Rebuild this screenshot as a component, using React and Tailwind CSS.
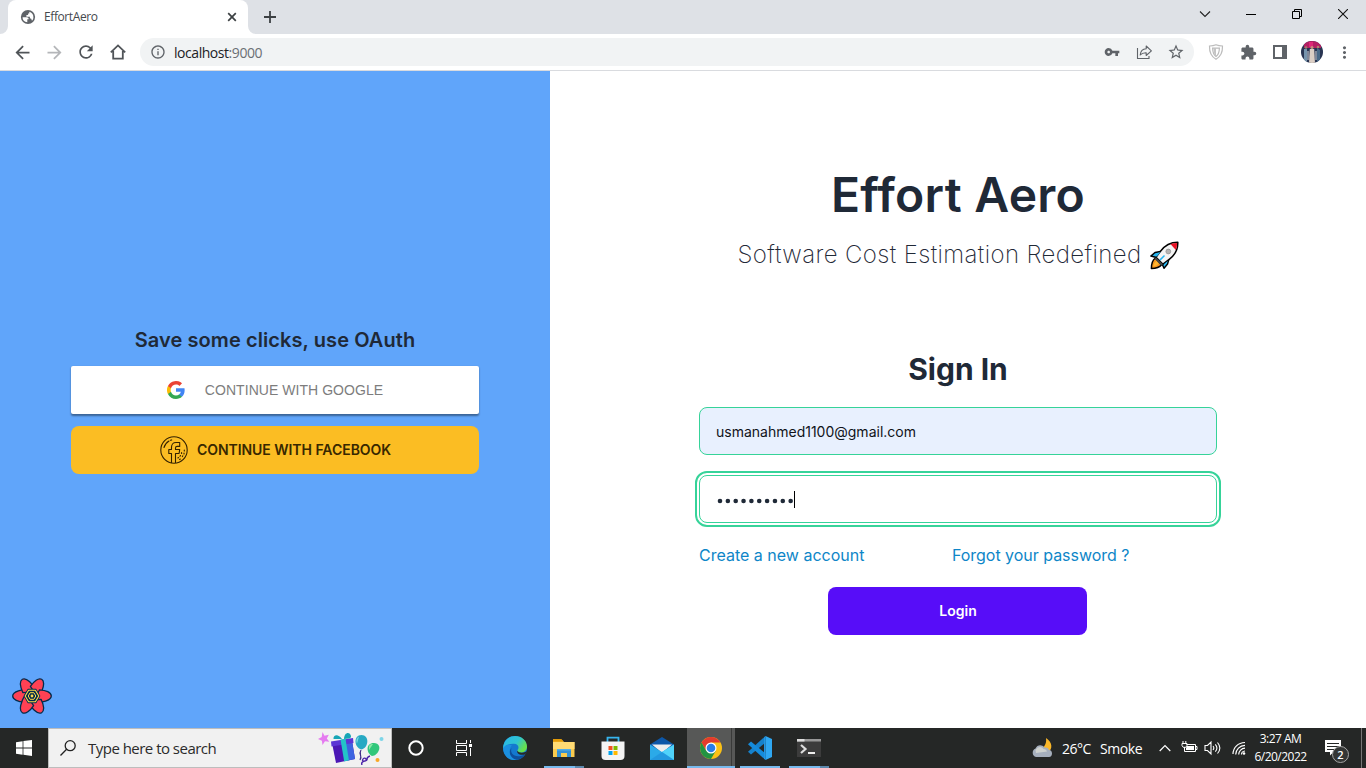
import React from "react";
import {
  MdArrowBack, MdArrowForward, MdRefresh, MdInfoOutline, MdVpnKey,
  MdStarBorder, MdExtension, MdMoreVert,
} from "react-icons/md";

const SYS = "font-['Open_Sans','Noto_Sans',sans-serif]";

function TabStrip() {
  return (
    <div className="flex h-[34px] bg-[#dee1e6] pr-0">
      <svg className="h-[34px] w-2 shrink-0" viewBox="0 0 8 34"><path d="M8 26v8H0a8 8 0 0 0 8-8z" fill="#fff" /></svg>
      <div className="flex w-[240px] items-center rounded-t-[8px] bg-white pl-[12px] pr-[10px]">
        <svg width="16" height="16" viewBox="0 0 16 16">
          <circle cx="8" cy="8" r="7.100" fill="#5f6368" />
          <path d="M2.600 8.300h4.200c1.300 0 1.900.8 1.900 1.900H7.300v3.100C4.500 13.100 2.500 11 2.600 8.300z" fill="#fff" />
          <path d="M9.300 2.800c2.500.5 4.200 2.700 4.100 5.400 0 1.600-.5 2.600-1.400 3.600l-.9-2.300H9.900V7.700H6.400V6.100h1.700V4.500h1.200z" fill="#fff" />
        </svg>
        <span className={`ml-[8px] text-[12px] tracking-[-0.400px] text-[#45494d] ${SYS}`}>EffortAero</span>
        <svg className="ml-auto" width="12" height="12" viewBox="0 0 12 12"><path d="M2.200 2.200l7.600 7.600M9.800 2.200l-7.600 7.600" stroke="#3c4043" strokeWidth="1.700" /></svg>
      </div>
      <svg className="h-[34px] w-2 shrink-0" viewBox="0 0 8 34"><path d="M0 26v8h8a8 8 0 0 1-8-8z" fill="#fff" /></svg>
      <svg className="mt-[10px] ml-[7px]" width="14" height="14" viewBox="0 0 14 14"><path d="M7 1v12M1 7h12" stroke="#3c4043" strokeWidth="1.800" /></svg>
      <div className="ml-auto flex h-[28px] items-center">
        <span className="flex w-[46px] justify-center"><svg width="12" height="12" viewBox="0 0 12 12"><path d="M1 3.500l5 5 5-5" fill="none" stroke="#222" strokeWidth="1.100" /></svg></span>
        <span className="flex w-[46px] justify-center"><svg width="10" height="10" viewBox="0 0 10 10"><path d="M0 5.500h10v-1H0z" fill="#000" shapeRendering="crispEdges" /></svg></span>
        <span className="flex w-[46px] justify-center"><svg width="10" height="10" viewBox="0 0 10 10"><path d="M.5 2.500h7v7h-7zM2.500 2.500v-2h7v7h-2" fill="none" stroke="#000" /></svg></span>
        <span className="flex w-[46px] justify-center"><svg width="10" height="10" viewBox="0 0 10 10"><path d="M0 0l10 10M10 0L0 10" stroke="#111" strokeWidth="1.100" /></svg></span>
      </div>
    </div>
  );
}

function Toolbar() {
  const cell = "flex w-8 shrink-0 justify-center";
  return (
    <div className="flex h-[37px] items-center border-b border-[#d9dbdf] bg-white pl-[6px] text-[#5f6368]">
      <span className={cell}><MdArrowBack size={21} color="#505458" /></span>
      <span className={cell}><MdArrowForward size={21} color="#b4b6b9" /></span>
      <span className={cell}><MdRefresh size={20} color="#505458" /></span>
      <span className={cell}>
        <svg width="18" height="18" viewBox="0 0 18 18"><path d="M1.800 9.300L9 2.400l7.200 6.900M4.200 8v7.600h9.600V8" fill="none" stroke="#505458" strokeWidth="1.800" /></svg>
      </span>
      <div className="ml-[6px] flex h-7 w-[1054px] items-center rounded-full bg-[#f1f3f4] pl-[10px] pr-[2px]">
        <MdInfoOutline size={16} />
        <span className={`ml-2 text-[14px] tracking-[-0.450px] text-[#202124] ${SYS}`}>localhost<span className="text-[#6b6f74]">:9000</span></span>
        <div className="ml-auto flex items-center">
          <span className={cell}><MdVpnKey size={16} /></span>
          <span className={cell}>
            <svg width="16" height="16" viewBox="0 0 16 16" fill="none" stroke="#5f6368" strokeWidth="1.100"><path d="M1.500 4v10.500h11.500V12" /><path d="M4.200 11c.4-3.900 2.400-6 6-6.200V2l5.200 4.900-5.200 4.600V8.700c-2.700-.1-4.500.5-6 2.300z" strokeLinejoin="round" /></svg>
          </span>
          <span className={cell}><MdStarBorder size={18} /></span>
        </div>
      </div>
      <div className="ml-[6px] flex items-center">
        <span className={cell}>
          <svg width="16" height="16" viewBox="0 0 16 16"><path d="M8 .8c2 .9 4.200 1.200 6.500 1.200.2 6-1.500 10.500-6.500 13.200C3 12.500 1.300 8 1.500 2 3.800 2 6 1.700 8 .8z" fill="#fff" stroke="#bcbcbc" strokeWidth="1.200" /><path d="M4.600 4.200h6.800C11.300 8 10.500 10.600 8 12.500 5.500 10.600 4.700 8 4.600 4.200z" fill="#fff" stroke="#bcbcbc" strokeWidth="1.200" /><path d="M8 4v8.500C6.300 11 5.600 8 5.500 4z" fill="#c4c4c4" /></svg>
        </span>
        <span className={cell}><MdExtension size={17} /></span>
        <span className={cell}><svg width="14" height="14" viewBox="0 0 14 14"><path d="M0 0h14v14H0zM2 2v10h7V2z" fill="#5f6368" fillRule="evenodd" /></svg></span>
        <span className={cell}>
          <svg width="22" height="22" viewBox="0 0 22 22">
            <clipPath id="av"><circle cx="11" cy="11" r="11" /></clipPath>
            <g clipPath="url(#av)">
              <path d="M0 0h22v22H0z" fill="#293552" /><path d="M3 0h17v7H3z" fill="#b51f63" /><path d="M8 1h4v5H8z" fill="#de2877" />
              <path d="M3 8h3v14H3z" fill="#7694ad" /><path d="M8.800 8h4.400l.8 14H8z" fill="#dccfc5" /><path d="M16 7l3 2v10l-3 3z" fill="#496987" />
              <circle cx="11" cy="6.500" r="1.500" fill="#c3937d" /><circle cx="5" cy="6.500" r="1.300" fill="#a47b6b" /><circle cx="17" cy="6" r="1.300" fill="#b3836d" /><path d="M6.500 10h1v9h-1zM14.500 10h1v9h-1z" fill="#d8dce0" />
            </g>
          </svg>
        </span>
        <span className={cell}><MdMoreVert size={19} /></span>
      </div>
    </div>
  );
}

function GoogleIcon() {
  return (
    <svg width="18" height="18" viewBox="0 0 18 18">
      <path d="M17.640 9.200c0-.64-.06-1.250-.16-1.840H9v3.480h4.840a4.140 4.140 0 0 1-1.790 2.720v2.260h2.900c1.700-1.570 2.690-3.880 2.690-6.620z" fill="#4285f4" />
      <path d="M9 18c2.430 0 4.470-.8 5.960-2.180l-2.910-2.260c-.81.540-1.840.86-3.050.86-2.340 0-4.330-1.580-5.040-3.710H.96v2.330A9 9 0 0 0 9 18z" fill="#34a853" />
      <path d="M3.960 10.710a5.400 5.400 0 0 1 0-3.420V4.960H.96a9 9 0 0 0 0 8.080z" fill="#fbbc05" />
      <path d="M9 3.580c1.320 0 2.510.45 3.440 1.350l2.580-2.590A9 9 0 0 0 .96 4.960l3 2.330C4.670 5.160 6.660 3.580 9 3.580z" fill="#ea4335" />
    </svg>
  );
}

function FacebookIcon() {
  return (
    <svg width="28" height="28" viewBox="0 0 28 28" fill="none" stroke="#332100" strokeWidth="1.100">
      <circle cx="14" cy="14" r="13.200" />
      <path d="M11.500 27V17.500H8.800v-4h2.700v-2.200c0-3 1.700-4.800 4.500-4.800h3.700v3.900h-2.600c-1.100 0-1.600.5-1.600 1.500v1.600h4.200l-.6 4h-3.600V27" strokeLinejoin="round" />
      <path d="M4 11.500c.8-2.900 2.500-5 5-6.500M10.500 4.300l1.200-.4" strokeLinecap="round" />
      <path d="M24.300 14v1M24 17v1M22.800 19.800l-.4.8M21.600 16.500v1M20.500 19.500l-.5.8M18.500 21.500l-.6.500M20.300 23l-.7.500" strokeLinecap="round" />
    </svg>
  );
}

function QueryLogo() {
  return (
    <svg width="40" height="36" viewBox="0 0 40 36">
      <g fill="#ff4154" stroke="#002c4b" strokeWidth="1.300" strokeLinejoin="round">
        {[0, 60, 120, 180, 240, 300].map((a) => (
          <path key={a} transform={`rotate(${a} 20 18)`} d="M17.500 11.500C10.500 11.200.7 13.300.7 18c0 3.600 5.500 5.800 11.800 6.200L15.500 18z" />
        ))}
      </g>
      <path d="M16.300 11.500h7.400l3.800 6.500-3.800 6.500h-7.400L12.500 18z" fill="#002c4b" stroke="#002c4b" strokeWidth="1.500" strokeLinejoin="round" />
      <g fill="none" stroke="#ffd94c" strokeLinejoin="round"><path d="M16.600 12.200h6.800l3.400 5.800-3.400 5.800h-6.800L13.200 18z" strokeWidth="1.100" /><path d="M18.100 14.700h3.800l1.900 3.300-1.900 3.300h-3.800L16.200 18z" strokeWidth="1" /></g>
      <circle cx="20" cy="18" r="1.400" fill="#ffd94c" />
    </svg>
  );
}

function OAuthPanel() {
  return (
    <div className="flex w-[550px] shrink-0 flex-col bg-[#60a5fa]">
      <div className="mt-[255px] ml-[71px] flex w-[408px] flex-col gap-3 text-center text-[#1f2937]">
        <h3 className="text-[20px]/[28px] font-semibold tracking-[0.080px]">Save some clicks, use OAuth</h3>
        <button className="flex h-12 items-center justify-center rounded-[2px] bg-white shadow-[0_1.500px_2px_rgba(0,0,0,0.400)]">
          <GoogleIcon />
          <span className="ml-[20px] font-['Liberation_Sans',sans-serif] text-[14px] tracking-[0.050px] text-[#7d7d7d]">CONTINUE WITH GOOGLE</span>
        </button>
        <button className="flex h-12 items-center justify-center gap-[9px] rounded-lg bg-[#fbbd23] pl-px text-[14px] font-semibold tracking-[-0.040px] text-[#382800]">
          <FacebookIcon />
          <span className="pb-px">CONTINUE WITH FACEBOOK</span>
        </button>
      </div>
      <div className="mt-auto mb-[14px] ml-3"><QueryLogo /></div>
    </div>
  );
}

function Rocket() {
  return (
    <svg width="29" height="29" viewBox="0 0 29 29" strokeLinejoin="round">
      <path d="M5.500 17C2.500 19 1.400 23 1.400 27.500c4.600 0 8.100-1 10.100-3.800z" fill="#f7941d" stroke="#000" strokeWidth="1.500" />
      <path d="M3.300 25.500c.3-2.600 1.400-4.500 3.200-5.500l2.300 2.300c-1.200 1.800-3 2.800-5.500 3.200z" fill="#ffb52e" />
      <path d="M10.500 10.500L5 11.500.9 15l4.600 1.200 7 7.500 1.500 3.600 3.500-4.200 1.500-5.600z" fill="#27b5ef" stroke="#000" strokeWidth="1.500" />
      <path d="M27.800 1.200c.2 6.300-2.300 12.300-8.300 17l-6.500 5L6 16.200l4.500-6C15 4 21 1.200 27.800 1.200z" fill="#f4f4f4" stroke="#000" strokeWidth="1.500" />
      <path d="M10.700 11L6.500 12.300 3.500 14.700l3.300.8zM17.700 20l-3 2.500-.8 1.500.4 1.500 2.300-2.800z" fill="#27b5ef" />
      <path d="M20.500 3c2.200-.8 4.400-1.100 6.600-1.100 0 2.400-.4 4.800-1.300 7z" fill="#e81224" />
      <path d="M6 16.200l7 7-2 1.300L4.600 17.700z" fill="#444" />
      <circle cx="18.300" cy="10.500" r="2.400" fill="#b4b4b4" stroke="#8d8d8d" strokeWidth=".7" />
      <path d="M14.500 14.500l-4.600 4.600" stroke="#27b5ef" strokeWidth="1.500" />
    </svg>
  );
}

function SignIn() {
  return (
    <div className="flex flex-1 flex-col items-center bg-white text-[#1f2937]">
      <h1 className="mt-[100px] text-[48px]/[48px] font-semibold tracking-[0.250px]">Effort Aero</h1>
      <div className="mt-[20px] flex h-8 items-center">
        <h2 className="text-[24px]/[32px] font-[240] tracking-[0.380px]">Software Cost Estimation Redefined</h2>
        <span className="ml-[8px]"><Rocket /></span>
      </div>
      <h2 className="mt-[80px] text-[30px]/[36px] font-bold">Sign In</h2>
      <div className="mt-[20px] flex h-12 w-[518px] items-center rounded-lg border border-[#36d399] bg-[#e8f0fe] px-4 text-[14px] text-[#10131a]">usmanahmed1100@gmail.com</div>
      <div className="mt-5 flex h-12 w-[518px] items-center rounded-lg border border-[#36d399] bg-white px-4 outline-2 outline-offset-2 outline-[#36d399]">
        <svg className="mt-[4px]" width="78" height="6" viewBox="0 0 78 6" fill="#1f2937">
          {Array.from({ length: 10 }, (_, i) => <circle key={i} cx={4 + i * 7.85} cy="3" r="2.300" />)}
        </svg>
        <span className="h-[17px] w-px bg-black" />
      </div>
      <div className="mt-5 grid h-6 w-[518px] grid-cols-[253px_1fr] text-[16px]/[24px] text-[#0e86c8]">
        <a>Create a new account</a>
        <a className="tracking-[-0.030px]">Forgot your password ?</a>
      </div>
      <button className="mt-5 mr-px h-12 w-[259px] rounded-lg bg-[#570df8] pb-[2px] pl-px text-[14px] font-semibold text-white">Login</button>
    </div>
  );
}

function Gift() {
  return (
    <svg width="68" height="34" viewBox="0 0 68 34">
      <path d="M5.500 1l2 3.800 4.300-1-2 3.800 2.500 3.200-4.300-.5L5.500 14l-.6-4.300L1 8l3.700-2z" fill="#e57bf0" />
      <path d="M15 12l20-2.500 3 18.500-19 4z" fill="#4b17b5" /><path d="M28 11l7-1.500 3 18.500-8 1.700z" fill="#3d64e0" />
      <path d="M14 10.500l22-3.500.5 5-22 3.500z" fill="#5b35d5" /><path d="M23.500 8.500l5-.8 3.400 21.500-4.700 1.200z" fill="#23c3c8" />
      <path d="M25 8c-4-6-9-4-8.500 0zM27 8c0-7 6-8 7-3 .3 1.500-1 2.300-2 2.500z" fill="#16a6b6" />
      <path d="M44 19c-3 5 2 5-1 10" fill="none" stroke="#402b87" strokeWidth="1.200" />
      <path d="M53 25c-6 2 0 4-5 5s-1-5 1-2-6 1-4 6" fill="none" stroke="#4c23a8" strokeWidth="1.400" />
      <path d="M44.500 4c-8.500 0-7.500 13 0 14.500 7.500-2 8-14.500 0-14.500z" fill="#27a9c3" /><path d="M42 5.500c-3 1.500-3 5-2 7z" fill="#7dd9e2" />
      <path d="M57 12c-9 0-7.500 10.500-2 13 6 0 12-12 2-13z" fill="#31c77b" /><path d="M52 15c1-2 3-2 4-2l-4 6z" fill="#8be8a5" />
      <circle cx="64.500" cy="8" r="2" fill="#7dd5e8" /><circle cx="60.500" cy="29" r="2" fill="#f9a825" />
    </svg>
  );
}

function Edge() {
  return (
    <svg width="24" height="24" viewBox="0 0 24 24">
      <defs><linearGradient id="eg" x1="0" y1="0" x2="1" y2=".5"><stop offset="0" stopColor="#28b5e8" /><stop offset=".6" stopColor="#2fc4d2" /><stop offset="1" stopColor="#67e04b" /></linearGradient></defs>
      <circle cx="12" cy="12" r="12" fill="#1479cf" />
      <path d="M.3 10C1.500 3.500 6.500 0 12 0c7 0 12 5 12 10.500 0 4-3 6-6.300 6-3 0-4-1.500-3-2.700 1.800-2.400.5-6-3.700-6C5.800 7.500 1.300 9.500.3 13z" fill="url(#eg)" />
      <path d="M9 9.500c-4.500 4-2 12.500 5.500 14.300C6 25.500 1 20 .2 13.500.5 9.500 5.500 7.800 9 9.500z" fill="#1b8fdf" />
      <path d="M8.500 12c-2 6 4 11 13.500 6.500-2 3.300-5 5-8.500 5.300C7 22 5 16 8.500 12z" fill="#0e4f9c" />
      <path d="M14.400 14.500c1 2.300 4.600 2.800 8 1.500l1.600-1-1.600 3.300c-5.400 1.500-9-.5-8-3.800z" fill="#272827" />
    </svg>
  );
}

function TaskIcon({ children, className = "", line = "", stacked = false }) {
  return (
    <span className={`relative flex h-10 w-12 shrink-0 items-center justify-center ${className}`}>
      {children}
      {line && <span className={`absolute bottom-0 h-[2px] bg-[#76b9ed] ${line}`} />}
      {stacked && <span className="absolute right-1 bottom-0 h-[2px] w-[9px] bg-[#5c88ac]" />}
    </span>
  );
}

function Taskbar() {
  return (
    <div className={`flex h-10 items-center bg-[#252726] text-white ${SYS}`}>
      <span className="flex w-12 justify-center"><svg width="16" height="16" viewBox="0 0 16 16"><path d="M0 2.200L6.600 1.200v6.300H0zM7.400 1.100L16 0v7.500H7.400zM0 8.400h6.600v6.300L0 13.800zM7.400 8.400H16V16l-8.600-1.200z" fill="#fff" /></svg></span>
      <div className="flex h-10 w-[344px] items-center border border-[#bdbdbd] bg-[#f1f1f1] pl-[10px] text-[#2b2b2b]">
        <svg width="18" height="18" viewBox="0 0 18 18" fill="none" stroke="#222" strokeWidth="1.300"><circle cx="11.200" cy="6.700" r="5" /><path d="M7.600 10.300L1.500 16.500" /></svg>
        <span className="ml-[11px] text-[15px] tracking-[-0.520px]">Type here to search</span>
        <span className="mr-[6px] ml-auto"><Gift /></span>
      </div>
      <TaskIcon><svg width="16" height="16" viewBox="0 0 16 16"><circle cx="8" cy="8" r="6.700" fill="none" stroke="#fff" strokeWidth="2" /></svg></TaskIcon>
      <TaskIcon><svg width="16" height="16" viewBox="0 0 16 16" fill="none" stroke="#fff"><path d="M.5 0v3.500h10V0M.5 16v-3.500h10V16M.5 5.500h10v5H.5zM14.500 0v3M14.500 8v8" /><path d="M13 4h3v3h-3z" fill="#fff" stroke="none" /></svg></TaskIcon>
      <div className="ml-[3px] flex gap-px">
        <TaskIcon><Edge /></TaskIcon>
        <TaskIcon line="inset-x-1" stacked>
          <svg width="22" height="19" viewBox="0 0 22 19"><path d="M0 1h9l2 2h10.500v15H0z" fill="#f9ca4d" /><path d="M0 0h8.500l2 2.700H0z" fill="#e39b09" /><path d="M0 3h21.500v7H0z" fill="#ffdb74" /><path d="M4 18v-7.500h14V18h-4v-4H8v4z" fill="#3390d5" /><path d="M4 10h14v1.500H4z" fill="#53aee6" /></svg>
        </TaskIcon>
        <TaskIcon>
          <svg width="24" height="24" viewBox="0 0 24 24"><path d="M6.500 6V1.700h11V6" fill="none" stroke="#37b5ee" strokeWidth="1.800" /><path d="M.5 5.500h23V20a4 4 0 0 1-4 4h-15a4 4 0 0 1-4-4z" fill="#f4f4f4" /><path d="M7.500 10h4v4h-4z" fill="#f25022" /><path d="M12.500 10h4v4h-4z" fill="#7fba00" /><path d="M7.500 15h4v4h-4z" fill="#00a4ef" /><path d="M12.500 15h4v4h-4z" fill="#ffb900" /></svg>
        </TaskIcon>
        <TaskIcon>
          <svg width="24" height="23" viewBox="0 0 24 23"><path d="M0 7.500L12 0l12 7.500V12H0z" fill="#0d57a8" /><path d="M2 7.500h20L12 16z" fill="#eee" /><path d="M0 7.500L12 15l12-7.500V23H0z" fill="#2baae8" /><path d="M12 15l12 8V7.500z" fill="#50d3fb" /><path d="M12 15l12 8H0z" fill="#1d8fda" opacity=".65" /></svg>
        </TaskIcon>
        <TaskIcon className="bg-[#575857]" line="inset-x-0">
          <svg width="22" height="22" viewBox="0 0 22 22">
            <circle cx="11" cy="11" r="11" fill="#fbc116" /><path d="M1.500 5.500A11 11 0 0 1 20.500 5.500H11L6.200 13.700z" fill="#e33b2e" /><path d="M1.500 5.500A11 11 0 0 0 11 22l4.800-8.300H6.200z" fill="#229342" /><circle cx="11" cy="11" r="5.500" fill="#fff" /><circle cx="11" cy="11" r="4.300" fill="#2b7de9" />
          </svg>
          <span className="absolute top-0 right-[3px] h-10 w-px bg-[#393a39]" />
        </TaskIcon>
        <TaskIcon line="inset-x-1">
          <svg width="24" height="24" viewBox="0 0 24 24"><path d="M17.500 0L24 3v18l-6.500 3z" fill="#2fa7f2" /><path d="M17.500 0v6.500L3 18.500l-3-2.700z" fill="#1681cb" /><path d="M17.500 24v-6.500L3 5.500 0 8.200z" fill="#158bdb" /><path d="M17.500 0L16 1.600v20.800L17.500 24z" fill="#2196e5" /></svg>
        </TaskIcon>
        <TaskIcon line="inset-x-1" stacked>
          <svg width="24" height="20" viewBox="0 0 24 20"><path d="M0 1h24v18H0z" fill="#3c3c3c" /><path d="M0 1h24v2.500H0z" fill="#989898" /><path d="M0 1h7.500v2.500H0z" fill="#ddd" /><path d="M4 7l4.500 4L4 15" fill="none" stroke="#ddd" strokeWidth="2.200" /><path d="M11 14h7v2h-7z" fill="#eee" /></svg>
        </TaskIcon>
      </div>
      <div className="ml-auto flex items-center">
        <svg width="22" height="20" viewBox="0 0 22 20"><path d="M15 0c6.500 4 7 11 2 14.500L7 12c5-1 9-5 8-12z" fill="#fab729" /><path d="M5 19a4.500 4.500 0 0 1-.5-8.500C6 6.500 11 6 13.500 9.500c3-.5 4 1 4.500 2.500 4 0 4 7 0 7z" fill="#a6afbd" /><path d="M4.500 12C7 7.500 11 8.500 12.500 11c2 0 3 1 3.500 2.500L5 15z" fill="#cfd2cf" /></svg>
        <span className="ml-[9px] w-[30px] text-[14px] tracking-[-0.500px] whitespace-nowrap">26°C</span>
        <span className="ml-[8px] w-[43px] text-[14px] tracking-[-0.400px]">Smoke</span>
        <svg className="ml-[16px]" width="12" height="8" viewBox="0 0 12 8"><path d="M.7 7L6 1.500 11.300 7" fill="none" stroke="#fff" strokeWidth="1.200" /></svg>
        <svg className="ml-[10px]" width="17" height="14" viewBox="0 0 17 14" fill="none" stroke="#fff"><path d="M5.500 3.500h9v7h-11V8M14.500 5.500h1.500v3h-1.500" /><path d="M6 5h7v4H5V7z" fill="#fff" stroke="none" /><path d="M1 2.500h5v2l-1.200 1.800H2.200L1 4.500zM2 0v2.500M4.800 0v2.500M3.500 6v4" /></svg>
        <svg className="ml-[6px]" width="18" height="16" viewBox="0 0 18 16" fill="none" stroke="#fff" strokeWidth="1.100"><path d="M1 5.500h2.500L7 2v12l-3.500-3.500H1zM9 6c1 1.200 1 2.800 0 4M11.300 4.300c2 2.300 2 5.100 0 7.400M13.500 2.500c3 3.500 3 7.500 0 11" /></svg>
        <svg className="ml-[10px]" width="14" height="14" viewBox="0 0 14 14" fill="none" stroke="#fff" strokeWidth="1.200"><path d="M1 13C1.200 6.500 6 1.700 13 1.500M3.700 13.500c.2-5 4-9 9.300-9.200M6.700 13.500c.1-3.500 2.800-6.200 6.300-6.300" /><path d="M9.500 13.500c0-2 1.300-3.300 3.500-3.500" /><circle cx="12" cy="12.500" r="1.300" fill="#fff" stroke="none" /></svg>
        <div className="ml-[8px] flex w-[53px] flex-col items-center text-[12px]/[18px] tracking-[-0.520px] whitespace-nowrap"><span>3:27 AM</span><span>6/20/2022</span></div>
        <svg className="mt-[8px] ml-[17px]" width="26" height="26" viewBox="0 0 26 26">
          <path d="M1 1h16v12H9.500L6 16.500V13H1z" fill="#fff" /><path d="M3 4.500h12M3 7.500h12M3 10.500h8" stroke="#252726" />
          <circle cx="16.500" cy="15.500" r="8" fill="#343635" stroke="#a5a5a5" />
          <text x="16.500" y="19.500" textAnchor="middle" fill="#fff" className={`text-[11px] font-semibold ${SYS}`}>2</text>
        </svg>
        <span className="ml-[11px] h-10 w-px bg-[#777]" />
        <span className="w-[4px]" />
      </div>
    </div>
  );
}

export default function App() {
  return (
    <div className="flex h-[768px] w-[1366px] flex-col overflow-hidden font-['Inter',sans-serif]">
      <TabStrip />
      <Toolbar />
      <main className="flex min-h-0 flex-1">
        <OAuthPanel />
        <SignIn />
      </main>
      <Taskbar />
    </div>
  );
}
